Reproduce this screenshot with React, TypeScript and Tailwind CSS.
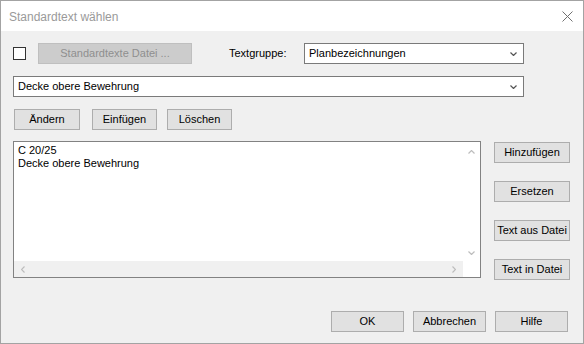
import React from 'react';

const font = { fontFamily: '"Liberation Sans", Arial, sans-serif' };

const Chevron = ({ dir, color }: { dir: 'down' | 'up' | 'left' | 'right'; color: string }) => {
  const pts: Record<string, string> = {
    down: '0.5,0.5 3.5,3.5 6.5,0.5',
    up: '0.5,3.5 3.5,0.5 6.5,3.5',
    left: '3.5,0.5 0.5,3.5 3.5,6.5',
    right: '0.5,0.5 3.5,3.5 0.5,6.5',
  };
  const horiz = dir === 'down' || dir === 'up';
  return (
    <svg width={horiz ? 7 : 4} height={horiz ? 4 : 7} viewBox={horiz ? '0 0 7 4' : '0 0 4 7'}>
      <polyline points={pts[dir]} fill="none" stroke={color} strokeWidth="1.2" />
    </svg>
  );
};

const Btn = ({ label, w, h = 'h-[21px]' }: { label: string; w: string; h?: string }) => (
  <div className={`${w} ${h} flex items-center justify-center bg-[#e1e1e1] border border-[#adadad] text-[11px] text-black`}>
    {label}
  </div>
);

const Combo = ({ value, w }: { value: string; w: string }) => (
  <div className={`${w} h-[21px] flex items-center justify-between bg-white border border-[#7a7a7a] pl-[4px] pr-[6px] text-[11px] text-black`}>
    <span>{value}</span>
    <Chevron dir="down" color="#555555" />
  </div>
);

export default function App() {
  return (
    <div style={font} className="w-[584px] h-[344px] flex flex-col border border-[#a3a3a3] bg-[#f0f0f0] overflow-hidden">
      {/* Title bar */}
      <div className="h-[30px] bg-white flex items-center justify-between pl-[8px] pr-[10px]">
        <span className="text-[12px] text-[#9a9a9a] pt-[1px]">Standardtext wählen</span>
        <svg width="11" height="11" viewBox="0 0 11 11">
          <path d="M0.5 0.5 L10.5 10.5 M10.5 0.5 L0.5 10.5" stroke="#707070" strokeWidth="1" />
        </svg>
      </div>

      <div className="flex flex-col pl-[12px]">
        {/* Row 1 */}
        <div className="flex items-center mt-[12px] h-[21px]">
          <div className="w-[13px] h-[13px] bg-white border border-[#333333]" />
          <div className="ml-[12px] w-[154px] h-[21px] flex items-center justify-center bg-[#cccccc] border border-[#bfbfbf] text-[11px] text-[#8f8f8f]">
            Standardtexte Datei ...
          </div>
          <span className="ml-[37px] w-[75px] text-[11px] text-black">Textgruppe:</span>
          <Combo value="Planbezeichnungen" w="w-[220px]" />
        </div>

        {/* Row 2 */}
        <div className="mt-[12px]">
          <Combo value="Decke obere Bewehrung" w="w-[511px]" />
        </div>

        {/* Row 3 */}
        <div className="flex mt-[12px] ml-[1px]">
          <Btn label="Ändern" w="w-[66px]" />
          <div className="ml-[12px]"><Btn label="Einfügen" w="w-[65px]" /></div>
          <div className="ml-[10px]"><Btn label="Löschen" w="w-[65px]" /></div>
        </div>

        {/* Row 4 */}
        <div className="flex mt-[11px]">
          <div className="w-[468px] h-[137px] border border-[#828282] bg-white flex flex-col">
            <div className="flex flex-1">
              <div className="flex-1 pl-[4px] pt-[2px] text-[11px] leading-[13px] text-black">
                <div>C 20/25</div>
                <div>Decke obere Bewehrung</div>
              </div>
              <div className="w-[17px] flex flex-col items-center justify-between pt-[8px] pb-[6px]">
                <Chevron dir="up" color="#bdbdbd" />
                <Chevron dir="down" color="#bdbdbd" />
              </div>
            </div>
            <div className="flex h-[16px]">
              <div className="flex-1 bg-[#f0f0f0] flex items-center justify-between pl-[7px] pr-[7px]">
                <Chevron dir="left" color="#bdbdbd" />
                <Chevron dir="right" color="#bdbdbd" />
              </div>
              <div className="w-[17px] bg-white" />
            </div>
          </div>
          <div className="ml-[13px] mt-[1px] flex flex-col gap-[18px]">
            <Btn label="Hinzufügen" w="w-[76px]" />
            <Btn label="Ersetzen" w="w-[76px]" />
            <Btn label="Text aus Datei" w="w-[76px]" />
            <Btn label="Text in Datei" w="w-[76px]" />
          </div>
        </div>

        {/* Row 5 */}
        <div className="flex justify-end gap-[9px] mt-[31px] pr-[15px]">
          <Btn label="OK" w="w-[73px]" />
          <Btn label="Abbrechen" w="w-[73px]" />
          <Btn label="Hilfe" w="w-[73px]" />
        </div>
      </div>
    </div>
  );
}
